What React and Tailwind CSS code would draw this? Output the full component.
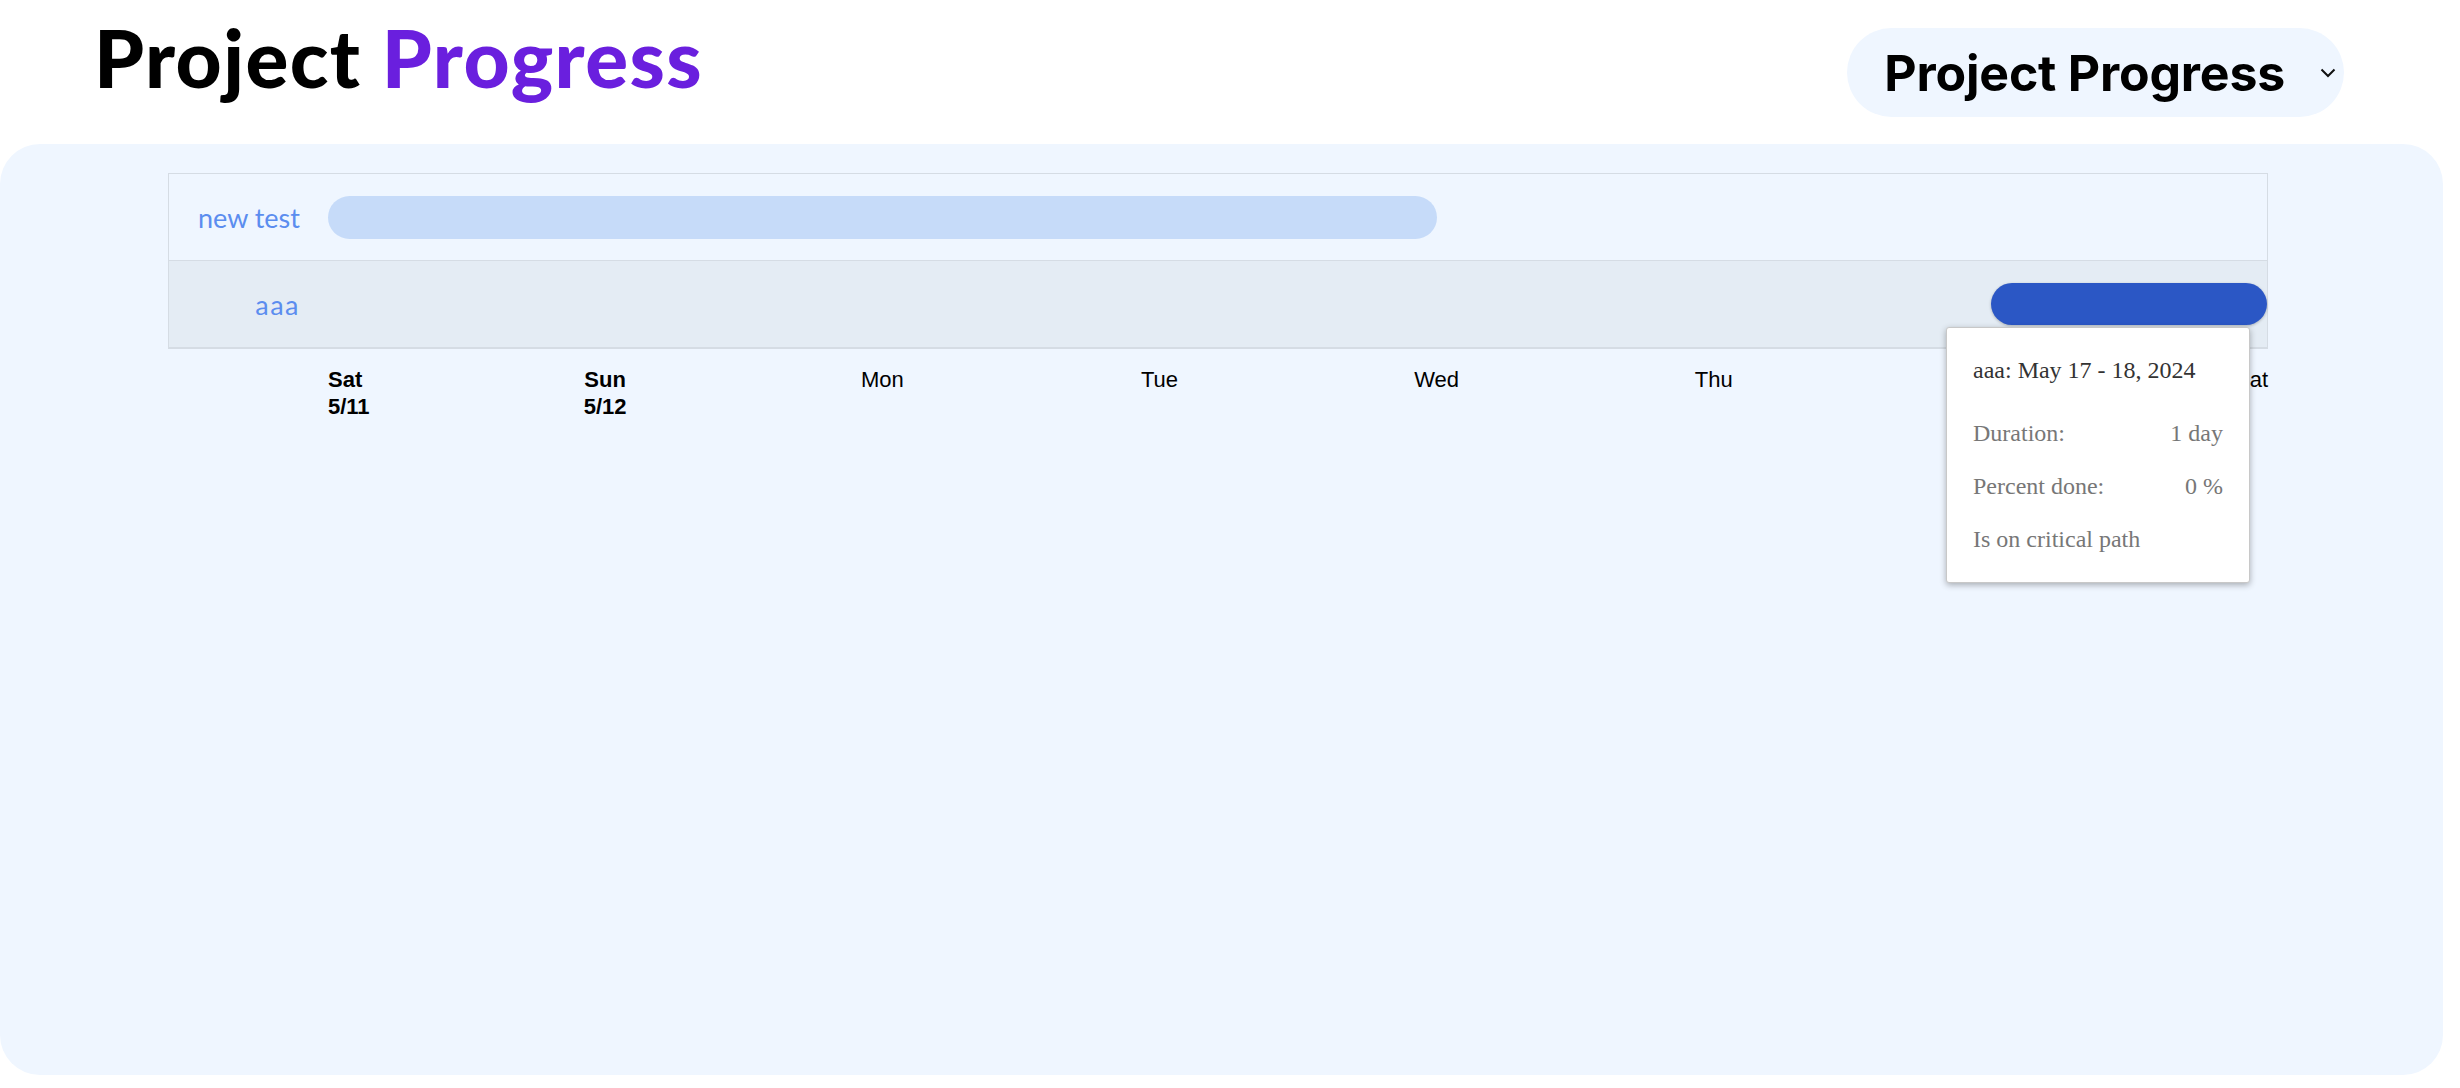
import React from "react";

const days = [
  { d: "Sun", sub: "5/12", bold: true },
  { d: "Mon" },
  { d: "Tue" },
  { d: "Wed" },
  { d: "Thu" },
  { d: "" },
];

export default function App() {
  return (
    <div className="w-[2443px] h-[1088px] bg-white overflow-hidden">
      <header className="flex justify-between items-start pl-[94px] pr-[99px] h-[144px]">
        <h1 className="mt-[17px] text-[80px] leading-none font-black text-black [font-family:Lato,sans-serif] tracking-[1.4px]">
          Project <span className="text-[#6a1fde]">Progress</span>
        </h1>
        <div className="mt-[28px] h-[89px] rounded-full bg-[#eff6ff] flex items-center pl-[37px] pr-[8px]">
          <span className="text-[50px] leading-none font-bold text-black [font-family:Inter,sans-serif] tracking-[-0.2px]">
            Project Progress
          </span>
          <svg className="ml-[35px]" width="16" height="10" viewBox="0 0 16 10" fill="none">
            <path d="M1.5 1.5 L8 8 L14.5 1.5" stroke="#111" strokeWidth="2" />
          </svg>
        </div>
      </header>

      <main className="h-[931px] rounded-[40px] bg-[#eff6ff] pt-[29px] pl-[168px]">
        <div className="relative w-[2100px]">
          <div className="border border-[#d5dce4] border-b-2">
            <div className="flex items-center h-[86px]">
              <div className="w-[159px] pr-[28px] text-right text-[27px] leading-none text-[#5b8def] [font-family:Lato,sans-serif]">
                new test
              </div>
              <div className="flex-1">
                <div className="w-[1109px] h-[43px] rounded-full bg-[#c6dbf9]" />
              </div>
            </div>
            <div className="flex items-center h-[87px] border-t border-[#d5dce4] bg-[#e4ecf4]">
              <div className="w-[159px] pr-[28px] text-right text-[27px] leading-none tracking-[1.5px] text-[#5b8def] [font-family:Lato,sans-serif]">
                aaa
              </div>
              <div className="flex-1">
                <div className="ml-[1663px] w-[276px] h-[42px] rounded-full bg-[#2b57c5] shadow-[0_1px_3px_rgba(0,0,0,0.25)]" />
              </div>
            </div>
          </div>

          <div className="relative ml-[160px] w-[1940px] mt-[17px] grid grid-cols-7 text-[22px] leading-[27px] text-black [font-family:'Liberation_Sans',Arial,sans-serif]">
            <div className="font-bold">
              <div>Sat</div>
              <div>5/11</div>
            </div>
            {days.map((x, i) => (
              <div key={i} className={x.bold ? "font-bold" : ""}>
                {x.d && (
                  <div className="w-fit -translate-x-1/2 text-center">
                    <div>{x.d}</div>
                    {x.sub && <div>{x.sub}</div>}
                  </div>
                )}
              </div>
            ))}
            <div className="absolute right-0 top-0">Sat</div>
          </div>

          <div className="absolute left-[1778px] top-[154px] w-[304px] h-[256px] bg-white border border-[#c8c8c8] rounded-[3px] shadow-[0_2px_6px_rgba(0,0,0,0.3)] px-[26px] pt-[16px] text-[24px] [font-family:'Liberation_Serif','Times_New_Roman',serif]">
            <div className="leading-[53px] text-[#333] mb-[10px]">aaa: May 17 - 18, 2024</div>
            <div className="flex justify-between leading-[53px] text-[#777]">
              <span>Duration:</span>
              <span>1 day</span>
            </div>
            <div className="flex justify-between leading-[53px] text-[#777]">
              <span>Percent done:</span>
              <span>0 %</span>
            </div>
            <div className="leading-[53px] text-[#777]">Is on critical path</div>
          </div>
        </div>
      </main>
    </div>
  );
}
